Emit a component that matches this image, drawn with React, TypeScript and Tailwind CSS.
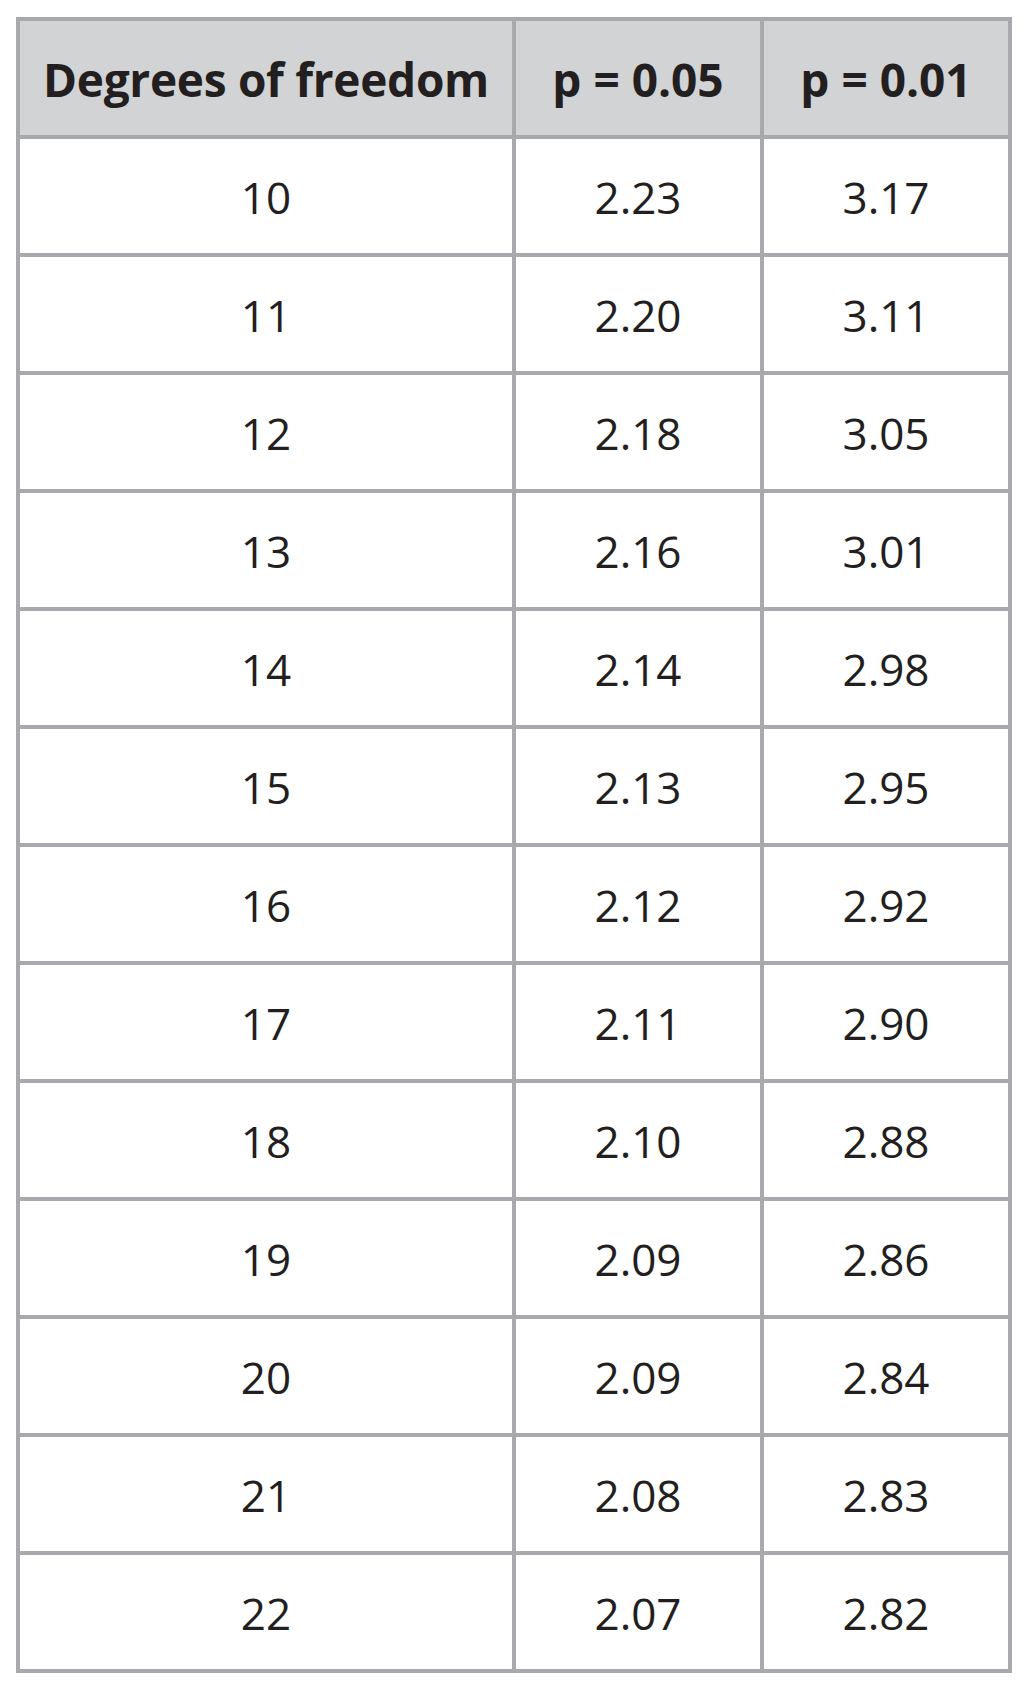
// Tableau des valeurs critiques de t
const rows: [string, string, string][] = [
  ["10", "2.23", "3.17"],
  ["11", "2.20", "3.11"],
  ["12", "2.18", "3.05"],
  ["13", "2.16", "3.01"],
  ["14", "2.14", "2.98"],
  ["15", "2.13", "2.95"],
  ["16", "2.12", "2.92"],
  ["17", "2.11", "2.90"],
  ["18", "2.10", "2.88"],
  ["19", "2.09", "2.86"],
  ["20", "2.09", "2.84"],
  ["21", "2.08", "2.83"],
  ["22", "2.07", "2.82"],
]

export default function App() {
  return (
    <div
      className="bg-white min-h-screen pt-[17px] pl-[16px]"
      style={{ fontFamily: '"Open Sans", "Noto Sans", sans-serif' }}
    >
      <table className="table-fixed border-collapse w-[996px] text-[#231f20] text-[44px] text-center">
        <colgroup>
          <col className="w-[496px]" />
          <col className="w-[248px]" />
          <col className="w-[248px]" />
        </colgroup>
        <thead>
          <tr className="bg-[#d1d3d4] h-[118px] text-[46px]">
            <th className="border-4 border-[#a7a9ac] font-bold p-0 pt-[3px] tracking-[-0.3px]">Degrees of freedom</th>
            <th className="border-4 border-[#a7a9ac] font-bold p-0 pt-[3px]">p = 0.05</th>
            <th className="border-4 border-[#a7a9ac] font-bold p-0 pt-[3px]">p = 0.01</th>
          </tr>
        </thead>
        <tbody>
          {rows.map((r) => (
            <tr key={r[0]} className="h-[118px]">
              <td className="border-4 border-[#a7a9ac] p-0 pt-[2px]">{r[0]}</td>
              <td className="border-4 border-[#a7a9ac] p-0 pt-[2px]">{r[1]}</td>
              <td className="border-4 border-[#a7a9ac] p-0 pt-[2px]">{r[2]}</td>
            </tr>
          ))}
        </tbody>
      </table>
    </div>
  )
}
